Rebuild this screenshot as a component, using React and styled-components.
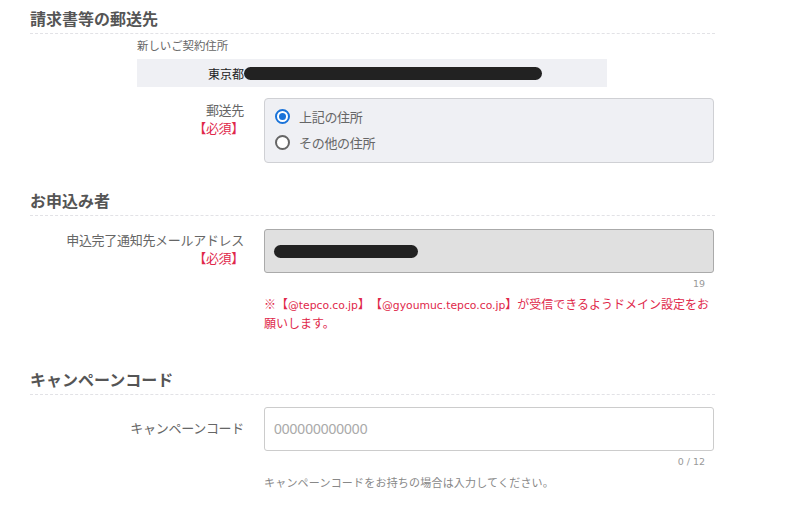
import React from "react";
import styled, { createGlobalStyle } from "styled-components";

const GlobalStyle = createGlobalStyle`
  body {
    margin: 0;
    background: #fff;
    font-family: "Noto Sans CJK JP", "Noto Sans", sans-serif;
    color: #555;
  }
`;

const Page = styled.div`
  width: 685px;
  padding: 0 0 0 30px;
`;

const Section = styled.section`
  margin-top: ${(p) => p.top}px;
`;

const Title = styled.h2`
  margin: 0;
  font-size: 16px;
  line-height: 22px;
  font-weight: 700;
  color: #555;
  padding-bottom: 4px;
  border-bottom: 1px dashed #e2e2e6;
`;

const SubBlock = styled.div`
  margin-left: 107px;
  width: 470px;
  padding-top: 2px;
`;

const SubLabel = styled.div`
  font-size: 11.4px;
  line-height: 18px;
  color: #666;
`;

const AddressBox = styled.div`
  margin-top: 5px;
  height: 28px;
  background: #eff0f4;
  display: flex;
  align-items: center;
  padding-left: 71px;
  font-size: 12px;
  color: #222;
`;

const Redacted = styled.span`
  display: inline-block;
  width: ${(p) => p.w}px;
  height: 13px;
  border-radius: 7px;
  background: #222;
`;

const Row = styled.div`
  display: grid;
  grid-template-columns: 214px 450px;
  column-gap: 20px;
  margin-top: ${(p) => p.top}px;
`;

const Label = styled.div`
  text-align: right;
  font-size: 13px;
  letter-spacing: -0.3px;
  line-height: 18px;
  color: #666;
  padding-top: ${(p) => p.pad}px;
`;

const Required = styled.div`
  color: #e0284a;
`;

const RadioBox = styled.div`
  border: 1px solid #cfd0d4;
  border-radius: 4px;
  background: #eff0f4;
  padding: 4px 10px 7px;
`;

const Option = styled.label`
  display: flex;
  align-items: center;
  gap: 9px;
  height: 26px;
  font-size: 13px;
  letter-spacing: -0.3px;
  color: #666;
`;

const Dot = styled.span`
  box-sizing: border-box;
  width: 15px;
  height: 15px;
  border-radius: 50%;
  border: 2px solid ${(p) => (p.on ? "#1a73d9" : "#666")};
  background: #fff;
  display: flex;
  align-items: center;
  justify-content: center;

  &::after {
    content: "";
    width: 7px;
    height: 7px;
    border-radius: 50%;
    background: ${(p) => (p.on ? "#1a73d9" : "transparent")};
  }
`;

const Field = styled.div`
  box-sizing: border-box;
  height: 44px;
  border: 1px solid ${(p) => (p.filled ? "#aaa" : "#ccc")};
  border-radius: 3px;
  background: ${(p) => (p.filled ? "#e0e0e0" : "#fff")};
  display: flex;
  align-items: center;
  padding-left: 9px;
`;

const Placeholder = styled.span`
  font-family: "Liberation Sans", Arial, sans-serif;
  font-size: 14px;
  color: #aaa;
`;

const Counter = styled.div`
  text-align: right;
  padding-right: 9px;
  margin-top: 5px;
  font-family: "DejaVu Sans", sans-serif;
  font-size: 9.5px;
  line-height: 12px;
  color: #999;
`;

const Note = styled.div`
  margin-top: 5px;
  font-size: 12px;
  line-height: 17px;
  color: #e0284a;
  text-spacing-trim: space-all;
`;

const Latin = styled.span`
  font-family: "DejaVu Sans", sans-serif;
  font-size: 10.8px;
`;

const Hint = styled.div`
  margin-top: 6px;
  font-size: 11px;
  letter-spacing: 0.2px;
  line-height: 16px;
  color: #888;
`;

const App = () => (
  <Page>
    <GlobalStyle />
    <Section top={7}>
      <Title>請求書等の郵送先</Title>
      <SubBlock>
        <SubLabel>新しいご契約住所</SubLabel>
        <AddressBox>
          東京都<Redacted w={298} />
        </AddressBox>
      </SubBlock>
      <Row top={11}>
        <Label pad={3}>
          郵送先
          <Required>【必須】</Required>
        </Label>
        <RadioBox>
          <Option>
            <Dot on />
            上記の住所
          </Option>
          <Option>
            <Dot />
            その他の住所
          </Option>
        </RadioBox>
      </Row>
    </Section>

    <Section top={26}>
      <Title>お申込み者</Title>
      <Row top={13}>
        <Label pad={2}>
          申込完了通知先メールアドレス
          <Required>【必須】</Required>
        </Label>
        <div>
          <Field filled>
            <Redacted w={144} />
          </Field>
          <Counter>19</Counter>
          <Note>
            ※【<Latin>@tepco.co.jp</Latin>】【<Latin>@gyoumuc.tepco.co.jp</Latin>】が受信できるようドメイン設定をお願いします。
          </Note>
        </div>
      </Row>
    </Section>

    <Section top={37}>
      <Title>キャンペーンコード</Title>
      <Row top={12}>
        <Label pad={12}>キャンペーンコード</Label>
        <div>
          <Field>
            <Placeholder>000000000000</Placeholder>
          </Field>
          <Counter>0 / 12</Counter>
          <Hint>キャンペーンコードをお持ちの場合は入力してください。</Hint>
        </div>
      </Row>
    </Section>
  </Page>
);

export default App;
